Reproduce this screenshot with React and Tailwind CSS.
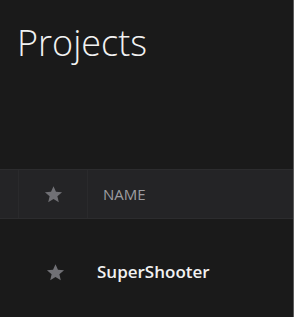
export default function App() {
  const Star = ({ className }) => (
    <svg viewBox="0 0 24 24" className={className} fill="currentColor">
      <path d="M12 1.5l3.1 7.1 7.7.6-5.9 5 1.8 7.6L12 17.8l-6.7 4 1.8-7.6-5.9-5 7.7-.6z" />
    </svg>
  );
  return (
    <div
      className="w-[294px] h-[317px] bg-[#1a1a1a] border-r border-[#5c5c5c] flex flex-col overflow-hidden"
      style={{ fontFamily: '"Open Sans", "Noto Sans", sans-serif' }}
    >
      <div className="pt-[25px] pl-[17px] text-[36px] leading-[36px] font-light text-[#f2f2f2]">
        Projects
      </div>
      <div className="mt-[108px] h-[50px] flex bg-[#242426] border-t border-b border-[#2c2c2e]">
        <div className="w-[19px] border-r border-[#2a2a2c]" />
        <div className="w-[69px] border-r border-[#2a2a2c] flex items-center justify-center">
          <Star className="w-[19px] h-[19px] text-[#707075]" />
        </div>
        <div className="flex items-center pl-[15px] text-[15px] text-[#9c9ca0]">NAME</div>
      </div>
      <div className="mt-[33px] h-[40px] flex items-center">
        <div className="w-[46px]" />
        <Star className="w-[19px] h-[19px] text-[#707075]" />
        <div className="pl-[32px] text-[17px] font-semibold text-[#f2f2f2]">SuperShooter</div>
      </div>
    </div>
  );
}
